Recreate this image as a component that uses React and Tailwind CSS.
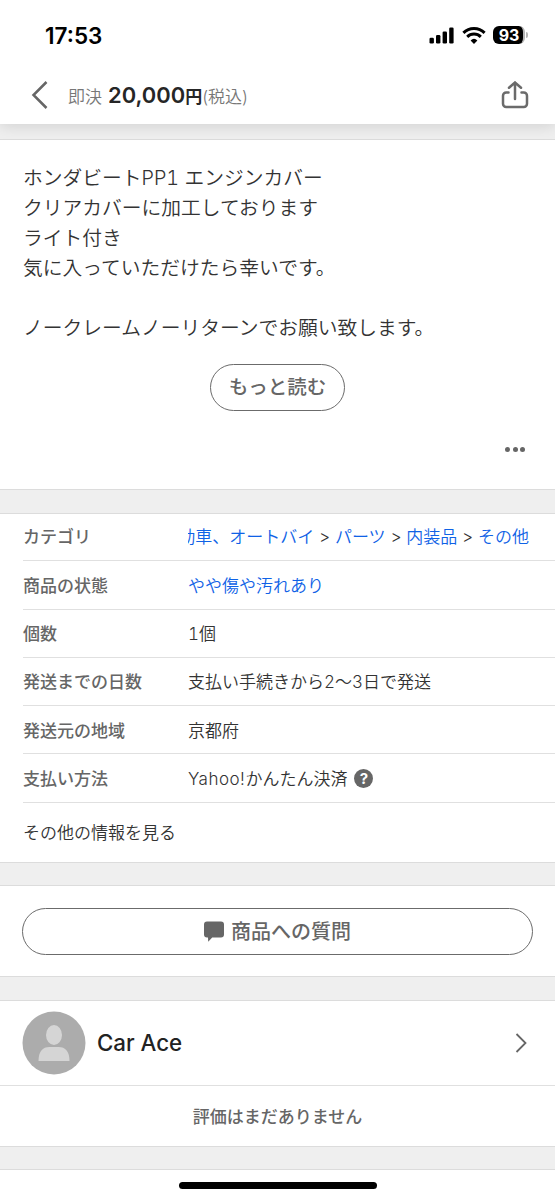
const details = [
    {
        label: "商品の状態",
        value: "やや傷や汚れあり",
        isLink: true,
    },
    {
        label: "個数",
        value: "1個",
    },
    {
        label: "発送までの日数",
        value: "支払い手続きから2〜3日で発送",
    },
    {
        label: "発送元の地域",
        value: "京都府",
    },
    {
        label: "支払い方法",
        value: (
            <>
                <span className="tracking-[0.5px]">Yahoo!</span>かんたん決済
            </>
        ),
        hasHelp: true,
    },
];

const categories = ["動車、オートバイ", "パーツ", "内装品", "その他"];

const description = [
    "ホンダビートPP1 エンジンカバー",
    "クリアカバーに加工しております",
    "ライト付き",
    "気に入っていただけたら幸いです。",
    "",
    "ノークレームノーリターンでお願い致します。",
];

function StatusBar() {
    return (
        <div className="flex h-[70px] items-center pr-[27px] pl-[45px]">
            <p className="flex-1 pt-px font-['Inter',sans-serif] text-[22.5px] font-semibold text-black">
                17:53
            </p>

            <svg width="25" height="17" viewBox="0 0 25 17" className="mr-2" fill="#000">
                <rect x="0.5" y="10.8" width="4.4" height="5.7" rx="1.3" />
                <rect x="7" y="8" width="4.4" height="8.5" rx="1.3" />
                <rect x="13.6" y="4.5" width="4.4" height="12" rx="1.3" />
                <rect x="20.2" y="0.5" width="4.4" height="16" rx="1.3" />
            </svg>

            <svg width="24" height="17" viewBox="0 0 24 17" className="mr-[7px]" fill="none" stroke="#000">
                <path d="M1.4 5.9a15.2 15.2 0 0 1 21.2 0" strokeWidth="3" />
                <path d="M5.2 9.8a9.8 9.8 0 0 1 13.6 0" strokeWidth="3" />
                <path d="M12 17 8.6 13.4a5 5 0 0 1 6.8 0z" fill="#000" stroke="none" />
            </svg>

            <div className="flex items-center">
                <div className="flex h-[18.5px] w-[32px] items-center justify-center rounded-[6px] border-r-2 border-[#b5b5b5] bg-black pl-0.5 font-['Inter',sans-serif] text-[16px] leading-none font-bold text-white">
                    93
                </div>
                <span className="ml-px h-1.5 w-0.5 rounded-r-full bg-[#b5b5b5]" />
            </div>
        </div>
    );
}

function Header() {
    return (
        <header className="relative z-10 h-[124px] bg-white shadow-[0_2px_14px_rgba(0,0,0,0.13)]">
            <StatusBar />

            <div className="flex h-[50px] items-center pr-[26px] pl-[31px]">
                <svg width="18" height="28" viewBox="0 0 18 28" fill="none" stroke="#666" strokeWidth="2.5">
                    <path d="M15.5 1 2.5 14l13 13" />
                </svg>

                <p className="ml-[19px] flex flex-1 items-baseline pt-px whitespace-nowrap">
                    <span className="text-[17px] font-[350] text-[#777]">即決</span>
                    <span className="ml-[6px] font-['Inter',sans-serif] text-[21.9px] font-semibold text-[#262626]">
                        20,000
                    </span>
                    <span className="text-[17px] font-bold text-[#262626]">円</span>
                    <span className="text-[17px] font-[350] text-[#777]">(税込)</span>
                </p>

                <svg
                    width="28"
                    height="28"
                    viewBox="0 0 28 28"
                    fill="none"
                    stroke="#6b6b6b"
                    strokeWidth="2.5"
                    strokeLinecap="round"
                >
                    <path d="M7.5 11.5H5.2a3.2 3.2 0 0 0-3.2 3.2v8.1A3.2 3.2 0 0 0 5.2 26h17.6a3.2 3.2 0 0 0 3.2-3.2v-8.1a3.2 3.2 0 0 0-3.2-3.2h-2.3" />
                    <path d="M14 18V1.5M8 6.8l6-5.3 6 5.3" />
                </svg>
            </div>
        </header>
    );
}

function DetailRow({ label, children }) {
    return (
        <div className="ml-[23px] flex h-[48.3px] items-center border-b border-[#e0e0e0] pt-[3px] text-[17px] whitespace-nowrap">
            <p className="w-[165px] font-medium text-[#666]">{label}</p>
            {children}
        </div>
    );
}

function HelpIcon() {
    return (
        <span className="mb-0.5 ml-[7px] flex size-[19px] items-center justify-center rounded-full bg-[#666] font-['Inter',sans-serif] text-[15px] leading-none font-bold text-white">
            ?
        </span>
    );
}

function App() {
    return (
        <div className="h-[1200px] w-[555px] overflow-hidden bg-[#efefef] font-['Inter','Noto_Sans_CJK_JP',sans-serif] text-[#333]">
            <Header />

            <section className="mt-[15px] h-[351px] border-y border-[#dcdcdc] bg-white pt-[23px]">
                <div className="pl-[23px] text-[19.75px] leading-[30px] font-[350] tabular-nums">
                    {description.map((line, index) => (
                        <p key={index} className="h-[30px] whitespace-nowrap">
                            {line}
                        </p>
                    ))}
                </div>

                <button
                    type="button"
                    className="mx-auto mt-[21px] flex h-[47px] w-[135px] items-center justify-center rounded-full border-[1.5px] border-[#6b6b6b] pt-px text-[19.5px] font-medium whitespace-nowrap text-[#666]"
                >
                    もっと読む
                </button>

                <div className="mt-[36px] mr-[30px] flex justify-end gap-[2.5px]">
                    <span className="size-[5px] rounded-full bg-[#666]" />
                    <span className="size-[5px] rounded-full bg-[#666]" />
                    <span className="size-[5px] rounded-full bg-[#666]" />
                </div>
            </section>

            <section className="mt-[23px] h-[350px] border-y border-[#dcdcdc] bg-white">
                <div className="-mt-px">
                    <DetailRow label="カテゴリ">
                        <div className="flex w-[341px] justify-end overflow-hidden font-[350]">
                            {categories.map((category, index) => (
                                <span key={category} className="flex shrink-0">
                                    {index > 0 && (
                                        <span className="w-[20.7px] text-center">&gt;</span>
                                    )}
                                    <a className="text-[#0f62e6]">{category}</a>
                                </span>
                            ))}
                        </div>
                    </DetailRow>

                    {details.map((detail) => (
                        <DetailRow key={detail.label} label={detail.label}>
                            <p
                                className={
                                    detail.isLink
                                        ? "font-[350] text-[#0f62e6]"
                                        : "font-[350] tabular-nums"
                                }
                            >
                                {detail.value}
                            </p>
                            {detail.hasHelp && <HelpIcon />}
                        </DetailRow>
                    ))}
                </div>

                <p className="ml-[23px] flex h-[59px] items-center pt-0.5 text-[17px] font-[350]">
                    その他の情報を見る
                </p>
            </section>

            <section className="mt-[22px] h-[92px] border-y border-[#dcdcdc] bg-white px-[22px] pt-[22px]">
                <button
                    type="button"
                    className="flex h-[47px] w-full items-center justify-center rounded-full border-[1.5px] border-[#6b6b6b] pt-px text-[20px] font-medium text-[#666]"
                >
                    <svg width="20" height="21" viewBox="0 0 20 21" fill="#666" className="mr-[7px] mb-px">
                        <path d="M3 0.5h14a3 3 0 0 1 3 3v10a3 3 0 0 1-3 3H8.2L4.2 20.8 4 16.5H3a3 3 0 0 1-3-3v-10a3 3 0 0 1 3-3z" />
                    </svg>
                    商品への質問
                </button>
            </section>

            <section className="mt-[23px] h-[147px] border-y border-[#dcdcdc] bg-white">
                <div className="flex h-[85px] items-center border-b border-[#e0e0e0] pr-[28px] pl-[22px]">
                    <svg width="64" height="64" viewBox="0 0 64 64">
                        <circle cx="32" cy="32" r="31.5" fill="#acacac" />
                        <ellipse cx="32" cy="24" rx="8" ry="10" fill="#d5d5d5" />
                        <path d="M16.5 50c0-9.5 4-14 11-14h9c7 0 11 4.5 11 14z" fill="#d5d5d5" />
                    </svg>
                    <p className="ml-[11px] flex-1 font-['Inter',sans-serif] text-[22.3px] font-medium text-[#222]">
                        Car Ace
                    </p>
                    <svg width="12" height="20" viewBox="0 0 12 20" fill="none" stroke="#666" strokeWidth="1.8">
                        <path d="M1.5 1 10.5 10l-9 9" />
                    </svg>
                </div>

                <p className="flex h-[60px] items-center justify-center pt-[3px] text-[17px] font-medium text-[#666]">
                    評価はまだありません
                </p>
            </section>

            <footer className="mt-[22px] flex h-[32px] justify-center border-t border-[#dcdcdc] bg-white pt-[12px]">
                <div className="h-[7px] w-[198px] rounded-full bg-black" />
            </footer>
        </div>
    );
}

export default App;
